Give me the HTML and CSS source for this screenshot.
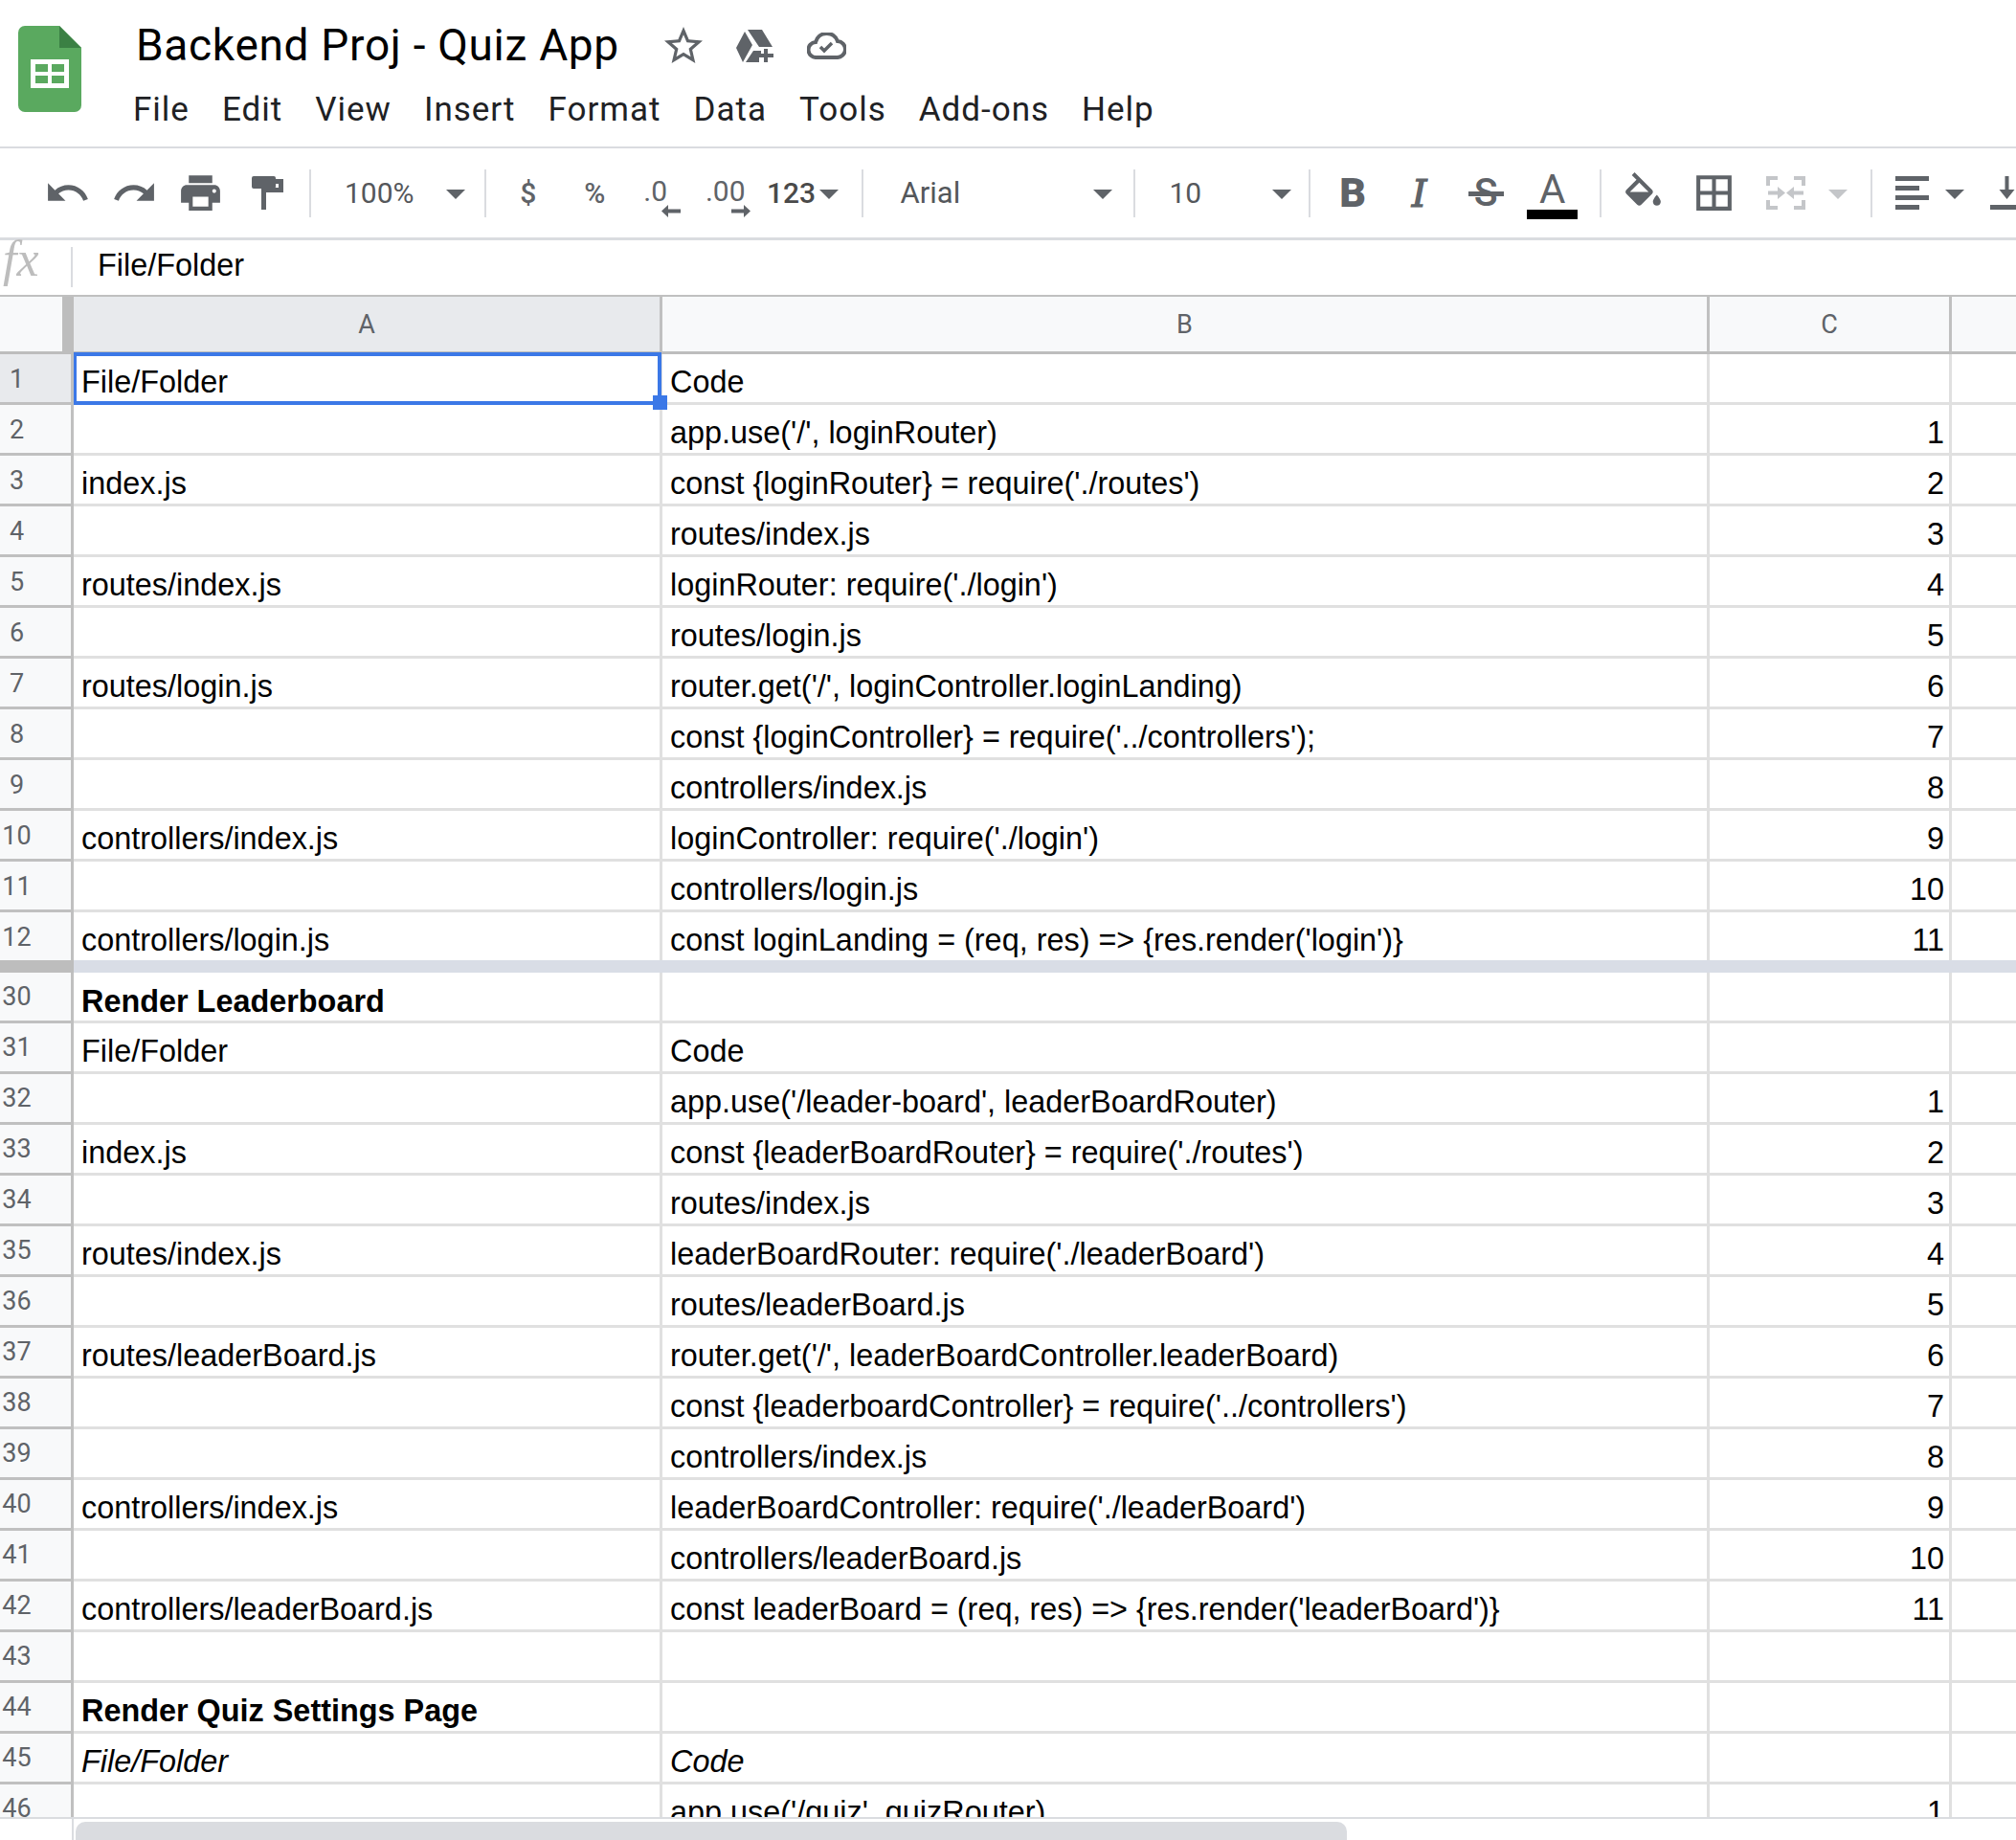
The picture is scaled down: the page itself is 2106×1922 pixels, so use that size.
FILE: index.html
```html
<!DOCTYPE html>
<html lang="en">
<head>
    <meta charset="UTF-8">
    <title>Backend Proj - Quiz App</title>
    <link rel="stylesheet" href="styles.css">
</head>
<body>
    <header class="top">
        <svg class="logo" viewBox="0 0 66 90">
            <path fill="#5aa95f" d="M7 0h36l23 23v60a7 7 0 0 1-7 7H7a7 7 0 0 1-7-7V7a7 7 0 0 1 7-7z"/>
            <path fill="#3b8044" d="M43 0l23 23H43z"/>
            <path fill="#fff" fill-rule="evenodd" d="M13 35h40v30H13zM18 40v8h13v-8zM35 40v8h13v-8zM18 52v8h13v-8zM35 52v8h13v-8z"/>
        </svg>
        <div class="doc">
            <div class="title-row">
                <span class="title">Backend Proj - Quiz App</span>
                <svg class="star" viewBox="0 0 24 24"><path fill="#5f6368" d="M22 9.24l-7.19-.62L12 2 9.19 8.63 2 9.24l5.46 4.73L5.82 21 12 17.27 18.18 21l-1.63-7.03L22 9.24zM12 15.4l-3.76 2.27 1-4.28-3.32-2.88 4.38-.38L12 6.1l1.71 4.04 4.38.38-3.32 2.88 1 4.28L12 15.4z"/></svg>
                <svg class="drive" viewBox="0 0 39 34">
                    <path fill="#5f6368" d="M12 0h15l11 18H24zM9 2l8 14L7 34 0 19z"/>
                    <path fill="#5f6368" d="M10 34l8-12h8v5h-2v7zM29 20h4v5h6v4h-6v5h-4v-5h-5v-4h5z"/>
                </svg>
                <svg class="cloud" viewBox="0 0 41 28">
                    <path fill="none" stroke="#5f6368" stroke-width="4" d="M10 26a8 8 0 0 1-1-16 12 12 0 0 1 23-1 8.500 8.500 0 0 1-1 17z"/>
                    <path fill="none" stroke="#5f6368" stroke-width="3.500" d="M14 15l4 4 8-8"/>
                </svg>
            </div>
            <nav class="menu">
                <span>File</span><span>Edit</span><span>View</span><span>Insert</span><span>Format</span><span>Data</span><span>Tools</span><span>Add-ons</span><span>Help</span>
            </nav>
        </div>
    </header>

    <div class="toolbar">
        <div class="btn"><svg class="ico" viewBox="0 0 24 24"><path d="M12.500 8c-2.650 0-5.050.99-6.900 2.600L2 7v9h9l-3.620-3.620c1.390-1.160 3.160-1.880 5.120-1.880 3.540 0 6.550 2.310 7.600 5.500l2.370-.78C21.080 11.030 17.150 8 12.500 8z"/></svg></div>
        <div class="btn"><svg class="ico" viewBox="0 0 24 24"><path d="M18.400 10.600C16.550 8.990 14.150 8 11.500 8c-4.650 0-8.580 3.030-9.960 7.220L3.900 16c1.050-3.190 4.050-5.500 7.600-5.500 1.950 0 3.730.72 5.120 1.880L13 16h9V7l-3.600 3.600z"/></svg></div>
        <div class="btn"><svg class="ico" viewBox="0 0 24 24"><path d="M19 8H5c-1.660 0-3 1.340-3 3v6h4v4h12v-4h4v-6c0-1.660-1.340-3-3-3zm-3 11H8v-5h8v5zm3-7c-.55 0-1-.45-1-1s.45-1 1-1 1 .45 1 1-.45 1-1 1zm-1-9H6v4h12V3z"/></svg></div>
        <div class="btn"><svg class="roller" viewBox="0 0 33 35"><path d="M2 0h21a2 2 0 0 1 2 2v1h8v14H15v18h-5V12h18V8h-3v3a2 2 0 0 1-2 2H2a2 2 0 0 1-2-2V2a2 2 0 0 1 2-2z"/></svg></div>
        <div class="sep s1"></div>

        <div class="select zoom"><span>100%</span><i class="caret"></i></div>
        <div class="sep"></div>

        <div class="btn fmt s2">$</div>
        <div class="btn fmt">%</div>
        <div class="btn dec dec-1">
            <span>.0</span>
            <svg class="arrow" viewBox="0 0 20 13"><path d="M7 0v4.500h13v4H7V13L0 6.500z"/></svg>
        </div>
        <div class="btn dec dec-2">
            <span>.00</span>
            <svg class="arrow" viewBox="0 0 20 13"><path d="M13 0v4.500H0v4h13V13l7-6.500z"/></svg>
        </div>
        <div class="select numfmt"><span>123</span><i class="caret"></i></div>
        <div class="sep"></div>

        <div class="select font"><span>Arial</span><i class="caret"></i></div>
        <div class="sep"></div>

        <div class="select size"><span>10</span><i class="caret"></i></div>
        <div class="sep"></div>

        <div class="btn tx s3 tx-b">B</div>
        <div class="btn tx tx-i">I</div>
        <div class="btn tx tx-s"><span>S</span></div>
        <div class="btn tx tx-a"><span>A</span><i class="swatch"></i></div>
        <div class="sep s4"></div>

        <div class="btn wide s5"><svg class="ico fill" viewBox="0 0 24 24"><path d="M16.560 8.940L7.620 0 6.210 1.410l2.380 2.380-5.150 5.150c-.59.59-.59 1.540 0 2.120l5.500 5.500c.29.29.68.44 1.060.44s.77-.15 1.060-.44l5.500-5.500c.59-.58.59-1.530 0-2.120zM5.210 10L10 5.210 14.790 10H5.210zM19 11.500s-2 2.170-2 3.500c0 1.100.9 2 2 2s2-.9 2-2c0-1.330-2-3.500-2-3.500z"/></svg></div>
        <div class="btn wide"><svg class="ico" viewBox="0 0 24 24"><path d="M3 3v18h18V3H3zm8 16H5v-6h6v6zm0-8H5V5h6v6zm8 8h-6v-6h6v6zm0-8h-6V5h6v6z"/></svg></div>
        <div class="btn wide merge">
            <svg class="merge-ico" viewBox="0 0 41 35">
                <path class="merge-line" d="M12 2H2v8M29 2h10v8M2 25v8h10M29 33h10v-8M2 17.500h12M39 17.500H27"/>
                <path d="M12 11l8 6.500-8 6.500zM29 11l-8 6.500 8 6.500z"/>
            </svg>
        </div>
        <i class="caret caret-off"></i>
        <div class="sep s6"></div>

        <div class="btn s7">
            <svg class="lines" viewBox="0 0 35 35"><path d="M0 0h35v5H0zM0 10h25v5H0zM0 20h35v5H0zM0 30h25v5H0z"/></svg>
        </div>
        <i class="caret"></i>
        <div class="btn s8">
            <svg class="lines" viewBox="0 0 35 35"><path d="M0 30h35v5H0zM15.500 0h4v14h6l-8 10-8-10h6z"/></svg>
        </div>
    </div>

    <div class="formula">
        <span class="fx">fx</span>
        <span class="formula-text">File/Folder</span>
    </div>

    <div class="sheet">
        <div class="row head">
            <div class="corner"><i></i></div>
            <div class="col col-on">A</div>
            <div class="col">B</div>
            <div class="col">C</div>
            <div class="col"></div>
        </div>

        <div class="row"><div class="rh rh-on">1</div><div class="c c-sel">File/Folder<div class="sel"><i></i></div></div><div class="c">Code</div><div class="c n"></div><div class="c"></div></div>
        <div class="row"><div class="rh">2</div><div class="c"></div><div class="c">app.use('/', loginRouter)</div><div class="c n">1</div><div class="c"></div></div>
        <div class="row"><div class="rh">3</div><div class="c">index.js</div><div class="c">const {loginRouter} = require('./routes')</div><div class="c n">2</div><div class="c"></div></div>
        <div class="row"><div class="rh">4</div><div class="c"></div><div class="c">routes/index.js</div><div class="c n">3</div><div class="c"></div></div>
        <div class="row"><div class="rh">5</div><div class="c">routes/index.js</div><div class="c">loginRouter: require('./login')</div><div class="c n">4</div><div class="c"></div></div>
        <div class="row"><div class="rh">6</div><div class="c"></div><div class="c">routes/login.js</div><div class="c n">5</div><div class="c"></div></div>
        <div class="row"><div class="rh">7</div><div class="c">routes/login.js</div><div class="c">router.get('/', loginController.loginLanding)</div><div class="c n">6</div><div class="c"></div></div>
        <div class="row"><div class="rh">8</div><div class="c"></div><div class="c">const {loginController} = require('../controllers');</div><div class="c n">7</div><div class="c"></div></div>
        <div class="row"><div class="rh">9</div><div class="c"></div><div class="c">controllers/index.js</div><div class="c n">8</div><div class="c"></div></div>
        <div class="row"><div class="rh">10</div><div class="c">controllers/index.js</div><div class="c">loginController: require('./login')</div><div class="c n">9</div><div class="c"></div></div>
        <div class="row"><div class="rh">11</div><div class="c"></div><div class="c">controllers/login.js</div><div class="c n">10</div><div class="c"></div></div>
        <div class="row last"><div class="rh">12</div><div class="c">controllers/login.js</div><div class="c">const loginLanding = (req, res) =&gt; {res.render('login')}</div><div class="c n">11</div><div class="c"></div></div>

        <div class="hidden-rows"><i></i></div>

        <div class="row after-gap"><div class="rh">30</div><div class="c bold">Render Leaderboard</div><div class="c"></div><div class="c n"></div><div class="c"></div></div>
        <div class="row"><div class="rh">31</div><div class="c">File/Folder</div><div class="c">Code</div><div class="c n"></div><div class="c"></div></div>
        <div class="row"><div class="rh">32</div><div class="c"></div><div class="c">app.use('/leader-board', leaderBoardRouter)</div><div class="c n">1</div><div class="c"></div></div>
        <div class="row"><div class="rh">33</div><div class="c">index.js</div><div class="c">const {leaderBoardRouter} = require('./routes')</div><div class="c n">2</div><div class="c"></div></div>
        <div class="row"><div class="rh">34</div><div class="c"></div><div class="c">routes/index.js</div><div class="c n">3</div><div class="c"></div></div>
        <div class="row"><div class="rh">35</div><div class="c">routes/index.js</div><div class="c">leaderBoardRouter: require('./leaderBoard')</div><div class="c n">4</div><div class="c"></div></div>
        <div class="row"><div class="rh">36</div><div class="c"></div><div class="c">routes/leaderBoard.js</div><div class="c n">5</div><div class="c"></div></div>
        <div class="row"><div class="rh">37</div><div class="c">routes/leaderBoard.js</div><div class="c">router.get('/', leaderBoardController.leaderBoard)</div><div class="c n">6</div><div class="c"></div></div>
        <div class="row"><div class="rh">38</div><div class="c"></div><div class="c">const {leaderboardController} = require('../controllers')</div><div class="c n">7</div><div class="c"></div></div>
        <div class="row"><div class="rh">39</div><div class="c"></div><div class="c">controllers/index.js</div><div class="c n">8</div><div class="c"></div></div>
        <div class="row"><div class="rh">40</div><div class="c">controllers/index.js</div><div class="c">leaderBoardController: require('./leaderBoard')</div><div class="c n">9</div><div class="c"></div></div>
        <div class="row"><div class="rh">41</div><div class="c"></div><div class="c">controllers/leaderBoard.js</div><div class="c n">10</div><div class="c"></div></div>
        <div class="row"><div class="rh">42</div><div class="c">controllers/leaderBoard.js</div><div class="c">const leaderBoard = (req, res) =&gt; {res.render('leaderBoard')}</div><div class="c n">11</div><div class="c"></div></div>
        <div class="row"><div class="rh">43</div><div class="c"></div><div class="c"></div><div class="c n"></div><div class="c"></div></div>
        <div class="row"><div class="rh">44</div><div class="c bold">Render Quiz Settings Page</div><div class="c"></div><div class="c n"></div><div class="c"></div></div>
        <div class="row"><div class="rh">45</div><div class="c ital">File/Folder</div><div class="c ital">Code</div><div class="c n"></div><div class="c"></div></div>
        <div class="row"><div class="rh">46</div><div class="c"></div><div class="c">app.use('/quiz', quizRouter)</div><div class="c n">1</div><div class="c"></div></div>
    </div>

    <div class="scrollbar"><div class="thumb"></div></div>
</body>
</html>
```

FILE: styles.css
```css
* {
    box-sizing: border-box;
}

body {
    margin: 0;
    height: 1922px;
    overflow: hidden;
    background: #fff;
    font-family: 'Liberation Sans', Arial, sans-serif;
    color: #000;
}

/* title area */
.top {
    display: flex;
    height: 155px;
    border-bottom: 2px solid #dadce0;
}

.logo {
    width: 66px;
    height: 90px;
    margin: 27px 0 0 19px;
    flex: none;
}

.doc {
    margin: 17px 0 0 57px;
    font-family: Roboto, sans-serif;
}

.title-row {
    display: flex;
    align-items: center;
    height: 60px;
}

.title {
    width: 548px;
    font-size: 46px;
    line-height: 60px;
    letter-spacing: 0.7px;
    white-space: nowrap;
}

.star {
    width: 48px;
    height: 48px;
    margin-top: 2px;
}

.drive {
    width: 39px;
    height: 34px;
    margin: 2px 0 0 31px;
    filter: blur(0.7px);
}

.cloud {
    width: 41px;
    height: 28px;
    margin: 2px 0 0 35px;
}

.menu {
    display: flex;
    gap: 34px;
    margin: 15px 0 0 -3px;
    font-size: 35px;
    line-height: 46px;
    letter-spacing: 1px;
    color: #202124;
}

/* toolbar */
.toolbar {
    display: flex;
    align-items: center;
    height: 96px;
    padding-left: 36px;
    border-bottom: 3px solid #dadce0;
    overflow: hidden;
    font-family: Roboto, sans-serif;
    color: #54575b;
    font-size: 30px;
}

.btn {
    display: flex;
    align-items: center;
    justify-content: center;
    flex: none;
    width: 69.500px;
    height: 70px;
}

.btn svg path {
    fill: #5f6368;
}

.btn .merge-ico path {
    fill: #c4c6c9;
}

.btn .merge-ico .merge-line {
    fill: none;
    stroke: #c4c6c9;
    stroke-width: 4;
}

.ico {
    width: 49px;
    height: 49px;
}

.fill {
    margin-top: 5px;
}

.roller {
    width: 33px;
    height: 35px;
}

.merge-ico {
    width: 41px;
    height: 35px;
}

.lines {
    width: 35px;
    height: 35px;
}

.sep {
    flex: none;
    width: 2px;
    height: 50px;
    background: #dadce0;
}

.s1 { margin-left: 9px; }
.s2 { margin-left: 9px; }
.s3 { margin-left: 10px; }
.s4 { margin-left: 14px; }
.s5 { margin-left: 7px; }
.s6 { margin-left: 24px; }
.s7 { margin-left: 7px; }
.s8 { margin-left: 10px; }

.select {
    display: flex;
    align-items: center;
    justify-content: space-between;
    flex: none;
    height: 50px;
}

.zoom {
    width: 181px;
    padding: 0 20px 0 35px;
}

.numfmt {
    width: 104.500px;
    padding: 0 24px 0 6px;
    font-weight: 500;
    color: #4a4a4a;
}

.font {
    width: 282px;
    padding: 0 22px 0 39px;
    font-size: 31px;
}

.size {
    width: 181px;
    padding: 0 18px 0 36px;
}

.caret {
    flex: none;
    width: 0;
    height: 0;
    margin-top: 3px;
    border-left: 10px solid transparent;
    border-right: 10px solid transparent;
    border-top: 10px solid #5f6368;
}

.caret-off {
    margin-left: 6px;
    border-top-color: #c4c6c9;
}

.fmt {
    font-weight: 500;
    color: #5f6368;
}

.dec {
    flex-direction: column;
    padding-top: 10px;
    line-height: 28px;
    color: #5f6368;
}

.arrow {
    width: 20px;
    height: 13px;
}

.dec-1 span { margin-right: 12px; }
.dec-1 .arrow { margin-left: 20px; }
.dec-2 span { margin-right: 5px; }
.dec-2 .arrow { margin-left: 28px; }

.tx {
    line-height: 1;
    color: #5f6368;
}

.tx-b {
    font-size: 43px;
    font-weight: 900;
}

.tx-i {
    font-family: 'DejaVu Serif', serif;
    font-style: italic;
    font-size: 40px;
    -webkit-text-stroke: 1.2px #5f6368;
}

.tx-s {
    font-size: 41px;
    font-weight: 500;
}

.tx-s span {
    position: relative;
}

.tx-s span::after {
    content: "";
    position: absolute;
    left: -6px;
    right: -6px;
    top: 19px;
    height: 5px;
    background: #5f6368;
}

.tx-a {
    flex-direction: column;
    font-size: 42px;
    justify-content: flex-start;
    padding-top: 13px;
}

.tx-a span {
    height: 39px;
    line-height: 36px;
}

.swatch {
    display: block;
    width: 53px;
    height: 10px;
    background: #000;
}

.wide {
    width: 74px;
}

.merge {
    width: 76px;
}

/* formula bar */
.formula {
    display: flex;
    height: 57px;
}

.fx {
    width: 76px;
    height: 42px;
    margin-top: 7px;
    padding-left: 3px;
    border-right: 2px solid #dadce0;
    font-family: 'Liberation Serif', serif;
    font-style: italic;
    font-size: 52px;
    line-height: 26px;
    color: #bdbdbd;
}

.formula-text {
    margin: 8px 0 0 26px;
    font-size: 32.400px;
    line-height: 36px;
}

/* grid */
.sheet {
    height: 1590px;
    overflow: hidden;
    border-top: 2px solid #c0c0c0;
}

.row {
    display: grid;
    grid-template-columns: 77px 615px 1094px 253px 1fr;
    height: 53px;
}

.head {
    height: 60px;
}

.last {
    height: 50px;
}

.after-gap {
    height: 53.400px;
}

.corner {
    padding-right: 12px;
    background: #bdbdbd;
    border-bottom: 3px solid #bdbdbd;
}

.corner i {
    display: block;
    height: 100%;
    background: #f8f9fa;
}

.col {
    display: flex;
    align-items: center;
    justify-content: center;
    background: #f8f9fa;
    border-right: 3px solid #c0c0c0;
    border-bottom: 3px solid #bdbdbd;
    font-family: Roboto, sans-serif;
    font-size: 27px;
    color: #5f6368;
}

.col:last-child {
    border-right: none;
}

.col-on {
    background: #e8eaed;
}

.rh {
    display: flex;
    align-items: center;
    justify-content: center;
    padding: 1px 39px 0 0;
    background: #f8f9fa;
    border-right: 3px solid #c0c0c0;
    border-bottom: 3px solid #c0c0c0;
    font-family: Roboto, sans-serif;
    font-size: 27px;
    color: #5f6368;
}

.rh-on {
    background: #e8eaed;
}

.c {
    padding: 11px 8px 0;
    border-right: 3px solid #e0e0e0;
    border-bottom: 3px solid #e0e0e0;
    font-size: 32.400px;
    line-height: 36px;
    white-space: nowrap;
}

.c:last-child {
    border-right: none;
}

.n {
    padding-right: 5px;
    text-align: right;
}

.bold {
    font-weight: bold;
}

.ital {
    font-style: italic;
}

.last .c,
.last .rh {
    border-bottom: none;
}

.after-gap .c {
    padding-top: 12px;
}

.c-sel {
    position: relative;
}

.sel {
    position: absolute;
    top: -2px;
    left: 0;
    width: 614px;
    height: 55px;
    border: 4px solid #3b78e7;
    border-left-width: 3px;
}

.sel i {
    position: absolute;
    right: -10px;
    bottom: -9px;
    width: 15px;
    height: 15px;
    background: #3b78e7;
}

.hidden-rows {
    height: 12.500px;
    background: #d9dde6;
}

.hidden-rows i {
    display: block;
    width: 77px;
    height: 100%;
    background: #bdbdbd;
}

/* bottom scrollbar */
.scrollbar {
    height: 24px;
    padding: 3px 0 0 79px;
    border-top: 2px solid #dadce0;
    background: linear-gradient(to right, #fff 75px, #dadce0 75px, #dadce0 77px, #fff 77px);
}

.thumb {
    width: 1328px;
    height: 19px;
    background: #dadce0;
    border-radius: 10px 10px 0 0;
}
```
